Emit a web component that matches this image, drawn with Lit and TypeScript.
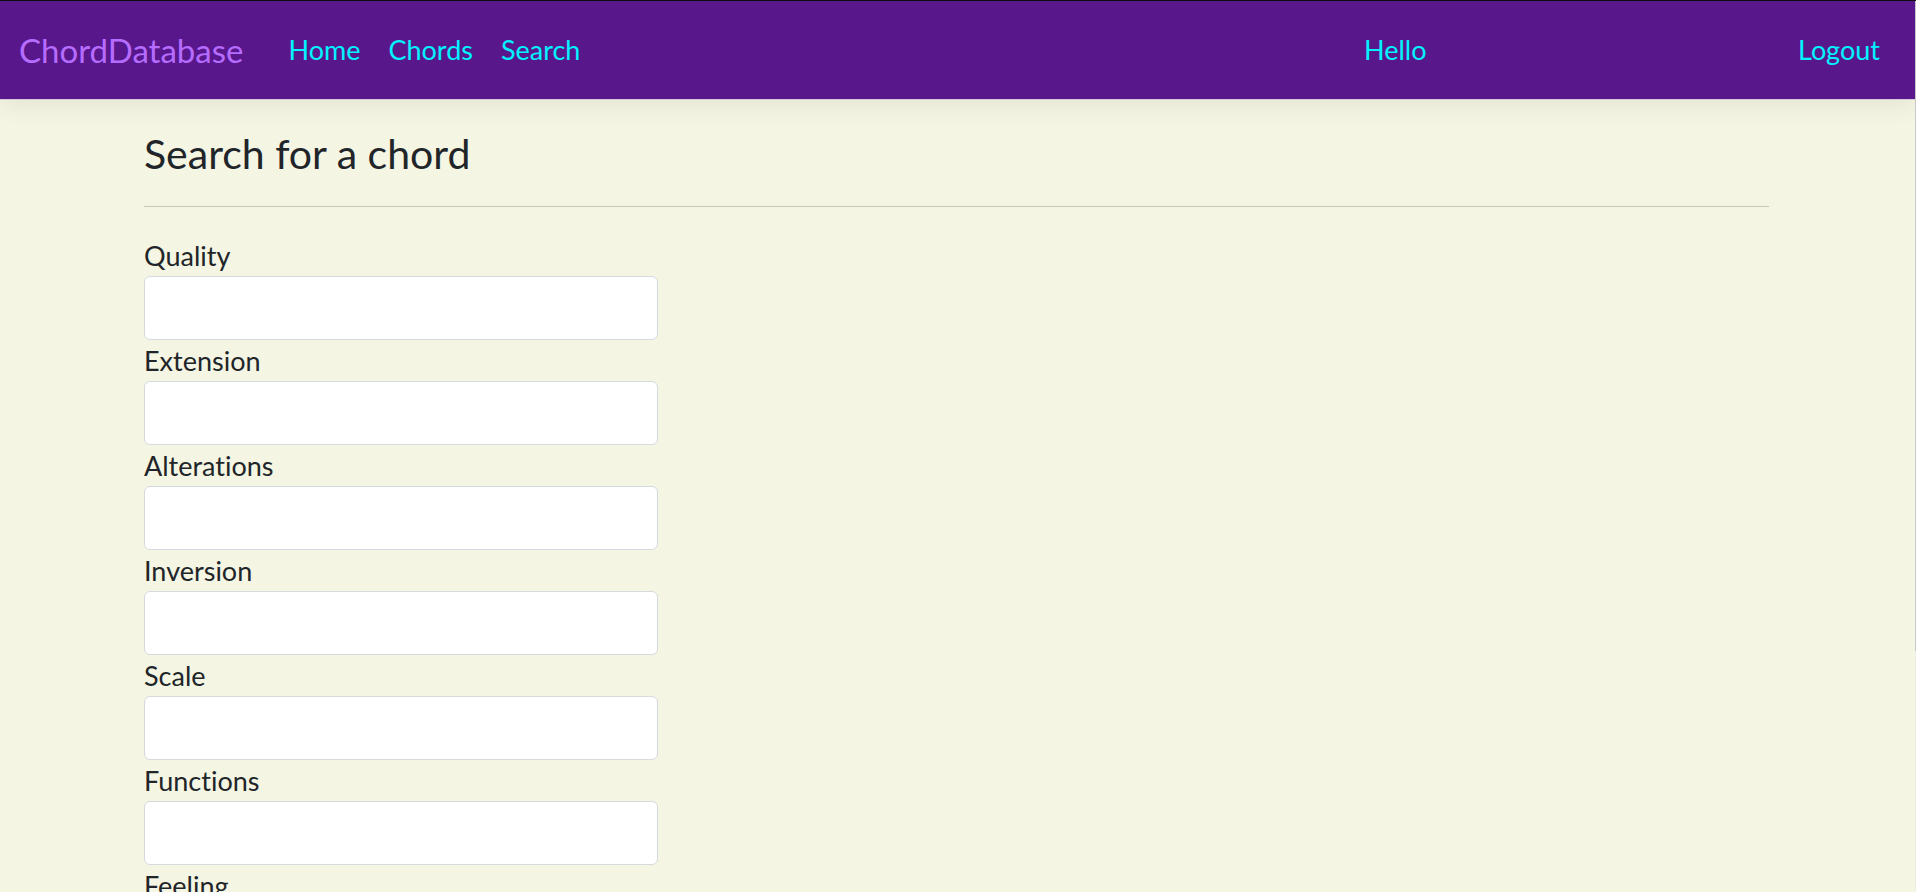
import { LitElement, html, css } from "lit";
import { customElement } from "lit/decorators.js";

const FIELDS = ["Quality", "Extension", "Alterations", "Inversion", "Scale", "Functions", "Feeling"];

@customElement("chord-nav")
class ChordNav extends LitElement {
  static styles = css`
    :host { display: block; position: relative; }
    .bar {
      display: flex;
      align-items: center;
      padding: 27px 36px 27px 19px;
      border-top: 1px solid #0d0d12;
      border-bottom: 1px solid #d9c9dc;
      background: #58188b;
      box-shadow: 0 4px 24px rgba(0, 0, 0, 0.08);
      line-height: 44px;
      font-size: 27px;
    }
    a { color: #00f3ff; text-decoration: none; }
    .brand { color: #b56cff; font-size: 33px; margin-right: 45px; }
    .links { display: flex; gap: 28px; flex: 1; }
    .account { display: flex; flex: 0 0 516px; justify-content: space-between; }
    .hello { color: #00f3ff; }
  `;
  render() {
    return html`<nav class="bar">
      <a class="brand" href="#">ChordDatabase</a>
      <div class="links">
        <a href="#home">Home</a><a href="#chords">Chords</a><a href="#search">Search</a>
      </div>
      <div class="account">
        <span class="hello">Hello</span><a href="#logout">Logout</a>
      </div>
    </nav>`;
  }
}

@customElement("app-root")
class AppRoot extends LitElement {
  static styles = css`
    :host {
      display: block;
      height: 100vh;
      overflow-y: auto;
      scrollbar-width: none;
      background: #f4f5e2;
      color: #212529;
      font-family: "Futura PT", Futura, Lato, sans-serif;
      font-size: 27px;
      font-variant-ligatures: none;
    }
    .track {
      position: fixed;
      top: 1px;
      right: 0;
      bottom: 0;
      width: 1px;
      background: #eeeee4;
    }
    .thumb { height: 73%; background: #c8c8c8; }
    .page { padding: 24px 147px 320px 144px; }
    h1 { margin: 0; font-size: 41px; line-height: 60px; font-weight: 400; }
    hr { margin: 22px 0 28px; border: 0; border-top: 1px solid #c6c8bb; }
    form { display: flex; flex-direction: column; max-width: 514px; }
    label { line-height: 41px; }
    input {
      box-sizing: border-box;
      width: 100%;
      height: 64px;
      padding: 8px 16px;
      border: 1px solid #d5dade;
      border-radius: 6px;
      background: #fff;
      color: inherit;
      font: inherit;
    }
  `;
  render() {
    return html`<chord-nav></chord-nav>
      <main class="page">
        <h1>Search for a chord</h1>
        <hr />
        <form>
          ${FIELDS.map((name) => {
            const id = name.toLowerCase();
            return html`<label for=${id}>${name}</label><input id=${id} name=${id} type="text" />`;
          })}
        </form>
      </main>
      <div class="track" aria-hidden="true"><div class="thumb"></div></div>`;
  }
}
